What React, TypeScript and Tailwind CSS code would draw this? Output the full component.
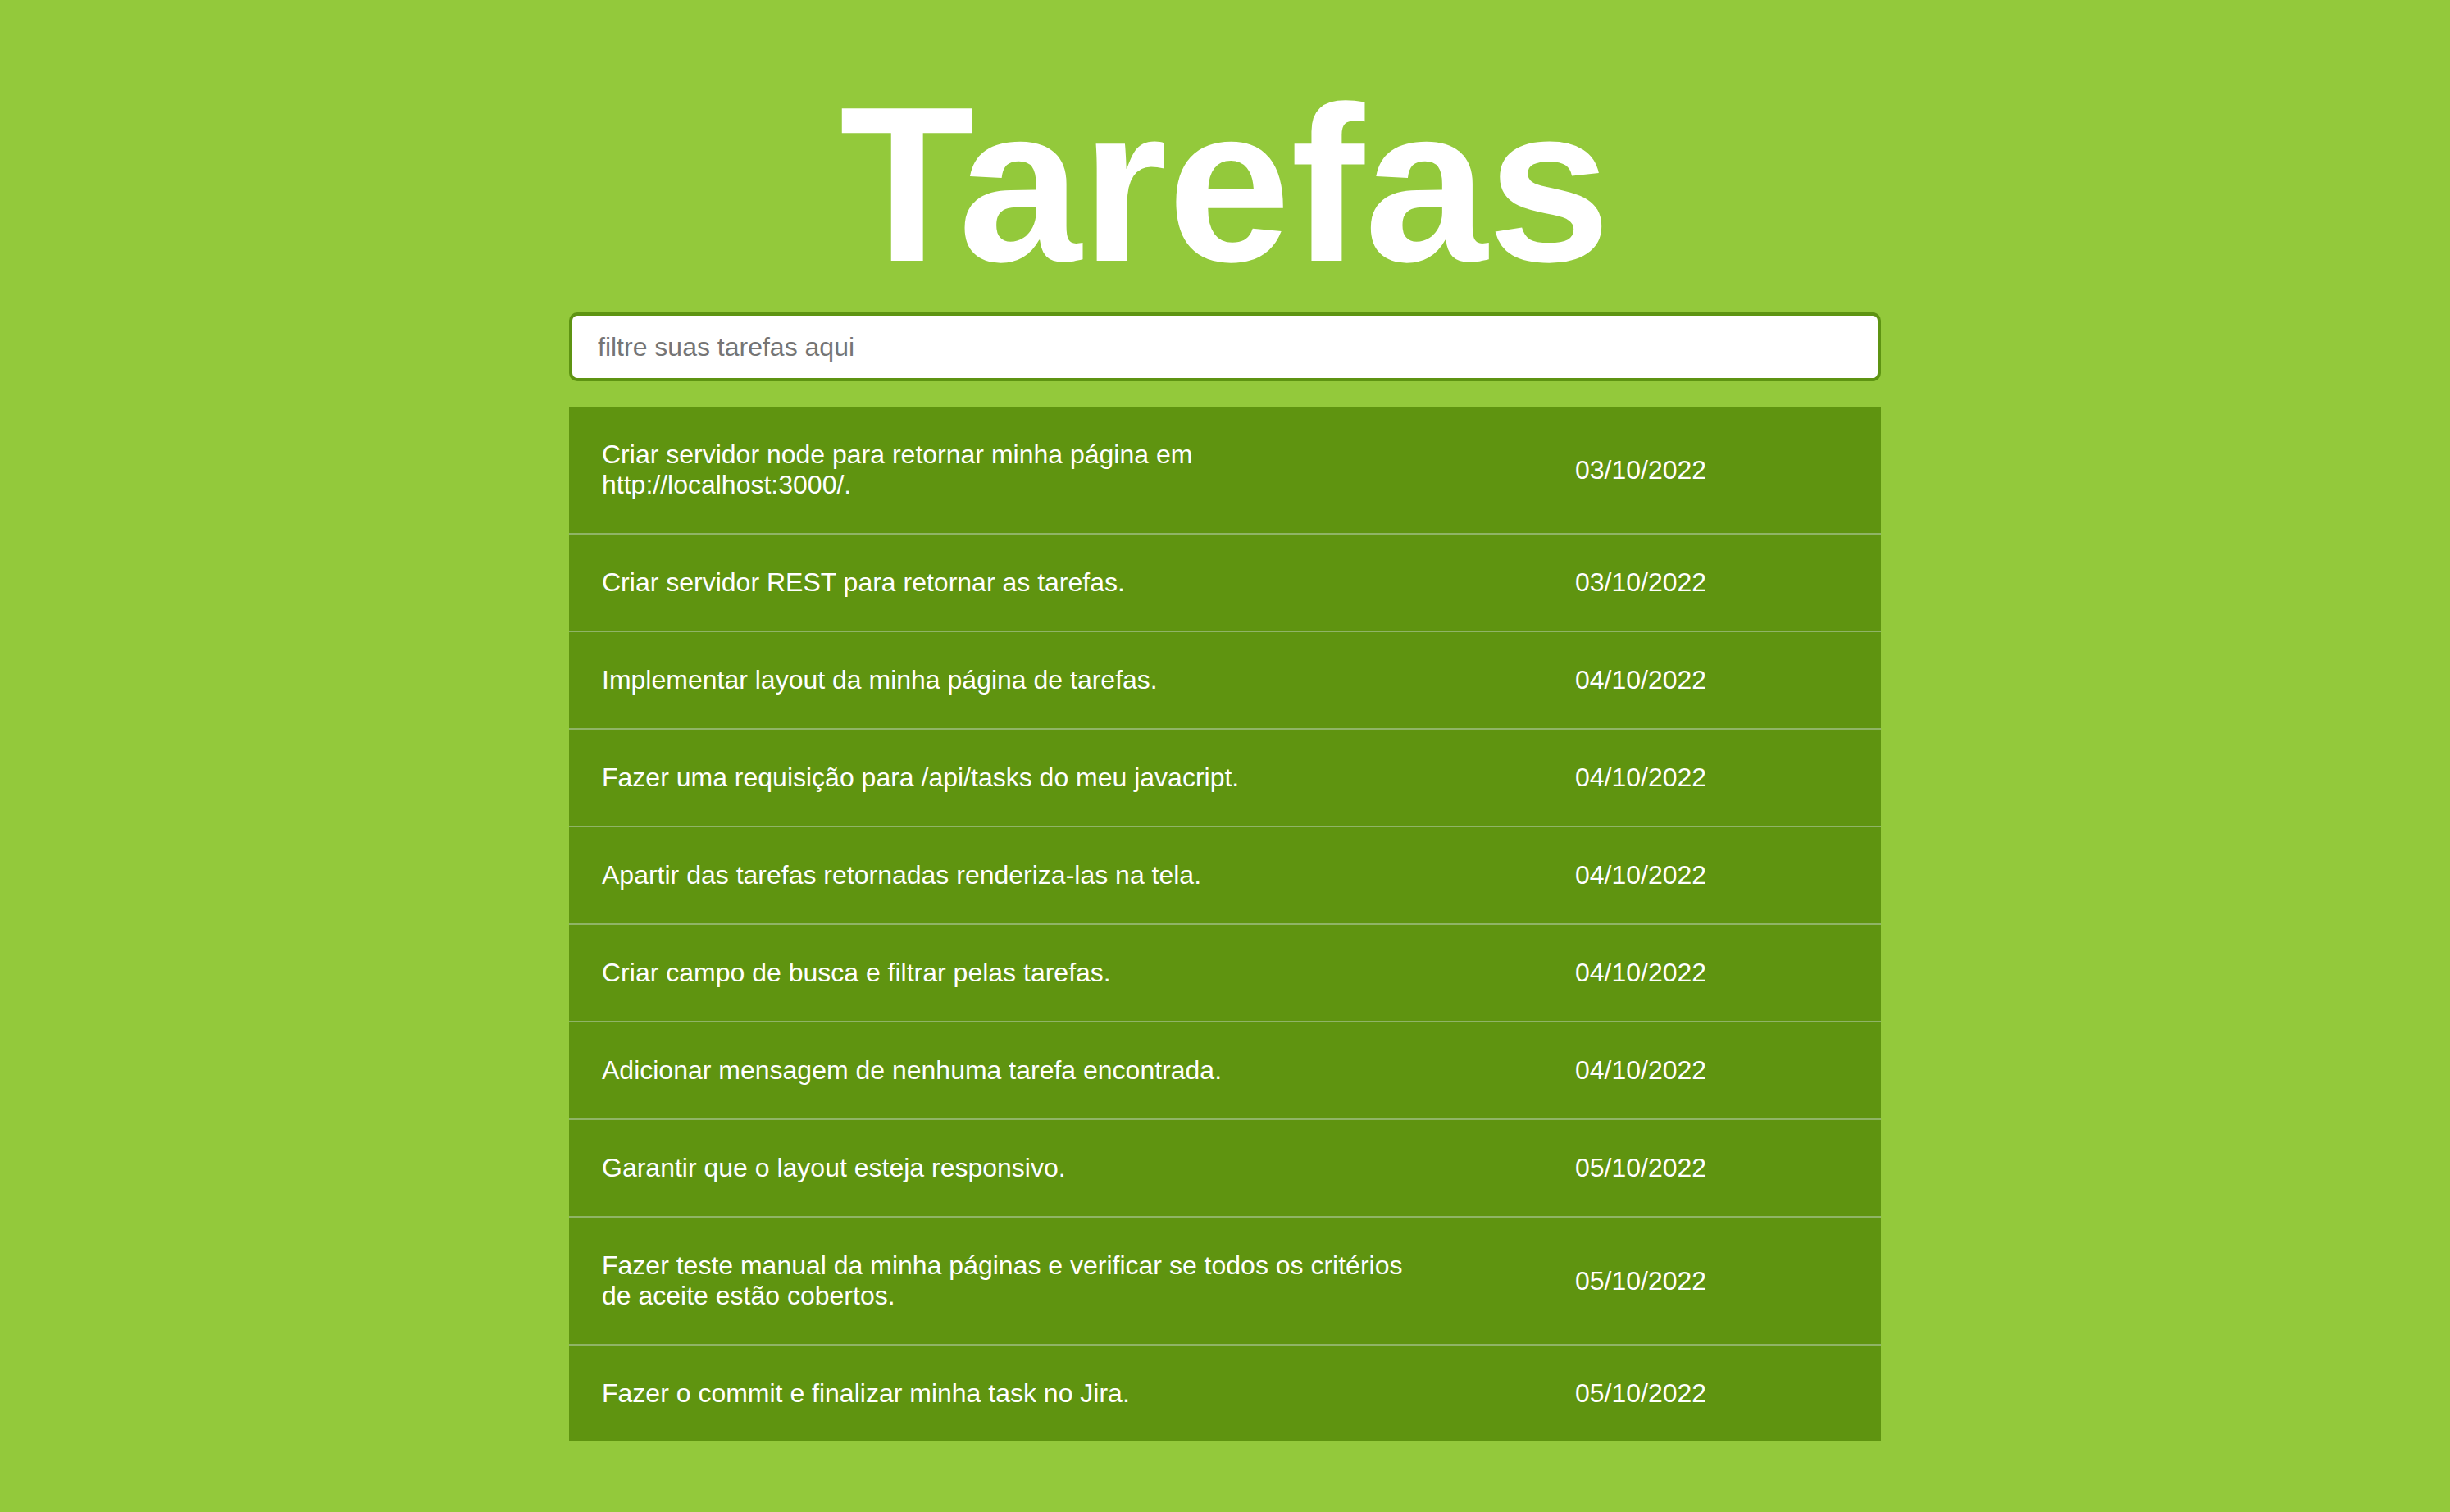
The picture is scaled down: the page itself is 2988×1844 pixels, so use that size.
import { useState } from 'react';

interface Task {
    id: number;
    description: string;
    date: string;
}

const tasks: Task[] = [
    { id: 1, description: 'Criar servidor node para retornar minha página em http://localhost:3000/.', date: '03/10/2022' },
    { id: 2, description: 'Criar servidor REST para retornar as tarefas.', date: '03/10/2022' },
    { id: 3, description: 'Implementar layout da minha página de tarefas.', date: '04/10/2022' },
    { id: 4, description: 'Fazer uma requisição para /api/tasks do meu javacript.', date: '04/10/2022' },
    { id: 5, description: 'Apartir das tarefas retornadas renderiza-las na tela.', date: '04/10/2022' },
    { id: 6, description: 'Criar campo de busca e filtrar pelas tarefas.', date: '04/10/2022' },
    { id: 7, description: 'Adicionar mensagem de nenhuma tarefa encontrada.', date: '04/10/2022' },
    { id: 8, description: 'Garantir que o layout esteja responsivo.', date: '05/10/2022' },
    { id: 9, description: 'Fazer teste manual da minha páginas e verificar se todos os critérios de aceite estão cobertos.', date: '05/10/2022' },
    { id: 10, description: 'Fazer o commit e finalizar minha task no Jira.', date: '05/10/2022' },
];

export default function App() {
    const [filter, setFilter] = useState('');

    const filtered = tasks.filter((t) =>
        t.description.toLowerCase().includes(filter.toLowerCase())
    );

    return (
        <div className="min-h-screen bg-[#93c93b] pt-[90px] pb-20 font-['Liberation_Sans',Arial,sans-serif]">
            <div className="mx-auto w-[1600px]">
                <h1 className="mb-[21px] text-center text-[270px] font-bold leading-none text-white">
                    Tarefas
                </h1>

                <input
                    type="text"
                    value={filter}
                    onChange={(e) => setFilter(e.target.value)}
                    placeholder="filtre suas tarefas aqui"
                    className="block h-[84px] w-full rounded-[10px] border-4 border-[#5e9412] bg-white pl-[31px] pr-4 text-[32px] text-gray-800 outline-none placeholder:text-[#757575]"
                />

                <div className="mt-[31px] bg-[#5f9410]">
                    {filtered.map((task, index) => (
                        <div
                            key={task.id}
                            className={`flex items-center text-[32px] leading-[37px] text-white ${
                                index < filtered.length - 1 ? 'border-b-2 border-[#8fb466]' : ''
                            }`}
                        >
                            <div className="w-[1187px] shrink-0 py-10 pl-10 pr-[147px]">{task.description}</div>
                            <div className="pl-10">{task.date}</div>
                        </div>
                    ))}
                    {filtered.length === 0 && (
                        <div className="px-10 py-10 text-[32px] leading-[37px] text-white">
                            Nenhuma tarefa encontrada.
                        </div>
                    )}
                </div>
            </div>
        </div>
    );
}
